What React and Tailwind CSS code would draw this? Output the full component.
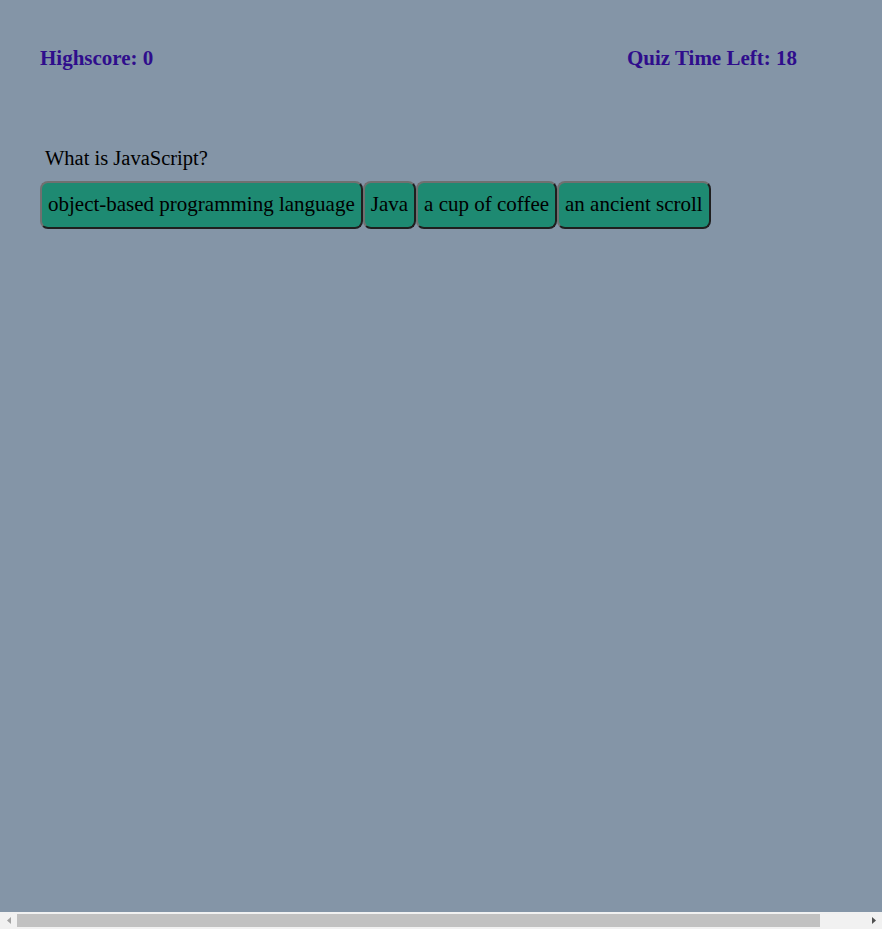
const answers = [
  "object-based programming language",
  "Java",
  "a cup of coffee",
  "an ancient scroll",
];

function Scrollbar() {
  return (
    <div className="flex items-center h-[17px] bg-[#f1f1f1]">
      <div className="w-[17px] flex justify-center">
        <svg width="4" height="7" viewBox="0 0 4 7">
          <path d="M4 0 L0 3.5 L4 7 Z" fill="#a3a3a3" />
        </svg>
      </div>
      <div className="w-[803px] h-[13px] bg-[#c1c1c1]" />
      <div className="flex-1" />
      <div className="w-[17px] flex justify-center">
        <svg width="4" height="7" viewBox="0 0 4 7">
          <path d="M0 0 L4 3.5 L0 7 Z" fill="#505050" />
        </svg>
      </div>
    </div>
  );
}

export default function App() {
  return (
    <div className="w-[882px] overflow-hidden" style={{ fontFamily: '"Liberation Serif", serif' }}>
      <div className="h-[912px] bg-[#8495a7] text-black">
        <header className="flex justify-between w-[757px] ml-10 pt-[45px] text-[21px] font-bold text-[#2f0d8c] leading-[26px]">
          <h1>Highscore: 0</h1>
          <h1>Quiz Time Left: 18</h1>
        </header>

        <main className="ml-10 mt-[74px]">
          <p className="pl-[5px] text-[20.5px] leading-[26px]">What is JavaScript?</p>
          <div className="flex mt-[10px]">
            {answers.map((a) => (
              <button
                key={a}
                className="h-12 px-[6px] text-[21px] bg-[#1e8a72] rounded-lg border-2 border-t-[#707070] border-l-[#707070] border-b-[#1f1f1f] border-r-[#1f1f1f]"
              >
                {a}
              </button>
            ))}
          </div>
        </main>
      </div>
      <Scrollbar />
    </div>
  );
}
